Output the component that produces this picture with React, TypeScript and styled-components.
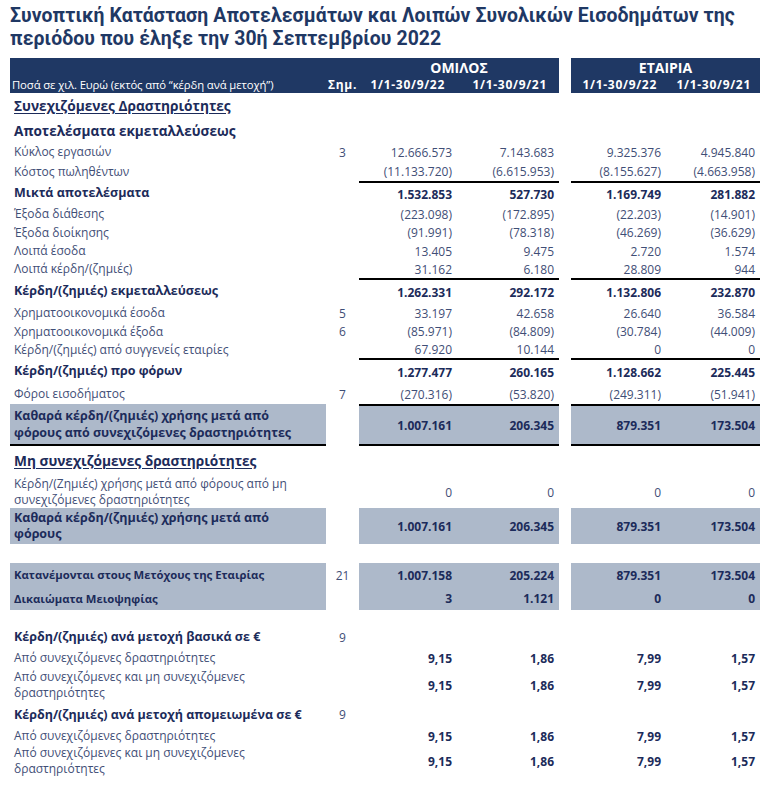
import React from "react";
import styled, { createGlobalStyle, css } from "styled-components";

const Global = createGlobalStyle`
  html, body { margin: 0; padding: 0; background: #ffffff; }
  body { font-family: "Open Sans", "DejaVu Sans", sans-serif; }
`;

const NAVY = "#1f3864";
const GRAY = "#adb9ca";
const TXT = "#3f4e76";
const BOLD = "#1c2b5a";
const COLS = "316px 33px 98px 102px 12px 95px 94px";

const Page = styled.div`
  width: 750px;
  padding: 4px 0 0 10px;
`;

const Title = styled.h1`
  margin: 0 0 8px 0;
  font-family: Roboto, "Liberation Sans", sans-serif;
  font-weight: 700;
  font-size: 19.4px;
  line-height: 23px;
  color: ${NAVY};
  letter-spacing: 0.1px;
`;

const HeaderRow = styled.div`
  display: grid;
  grid-template-columns: ${COLS};
  height: 35px;
`;

const HeadBlock = styled.div<{ $span: string; $cols: string }>`
  grid-column: ${(p) => p.$span};
  background: ${NAVY};
  display: grid;
  grid-template-columns: ${(p) => p.$cols};
  grid-template-rows: 18px 17px;
  color: #ffffff;
`;

const GroupTitle = styled.div<{ $span: string }>`
  grid-column: ${(p) => p.$span};
  grid-row: 1;
  text-align: center;
  font-family: "Open Sans", sans-serif;
  font-weight: 700;
  font-size: 14px;
  line-height: 20px;
`;

const HeadCaption = styled.div`
  grid-row: 2;
  font-size: 11.3px;
  line-height: 17px;
  padding-left: 2px;
  white-space: nowrap;
  letter-spacing: -0.1px;
`;

const HeadCell = styled.div<{ $pr?: number; $center?: boolean }>`
  grid-row: 2;
  font-weight: 700;
  font-size: 12px;
  line-height: 17px;
  letter-spacing: 0.7px;
  white-space: nowrap;
  text-align: ${(p) => (p.$center ? "center" : "right")};
  padding-right: ${(p) => p.$pr ?? 0}px;
`;

const Row = styled.div<{ $h: number }>`
  display: grid;
  grid-template-columns: ${COLS};
  height: ${(p) => p.$h}px;
`;

type LabelVariant = "section" | "sub" | "total" | "item" | "small";

const labelStyles: Record<LabelVariant, ReturnType<typeof css>> = {
  section: css`
    font-weight: 700;
    font-size: 13.7px;
    color: ${BOLD};
    text-decoration: underline;
    text-underline-offset: 2px;
  `,
  sub: css`
    font-weight: 700;
    font-size: 13.6px;
    color: ${BOLD};
  `,
  total: css`
    font-weight: 700;
    font-size: 12.5px;
    color: ${BOLD};
  `,
  small: css`
    font-weight: 700;
    font-size: 11.3px;
    color: ${BOLD};
  `,
  item: css`
    font-weight: 400;
    font-size: 12px;
    color: ${TXT};
  `,
};

const Label = styled.div<{ $v: LabelVariant; $gray?: boolean; $under?: boolean; $lh?: number }>`
  display: flex;
  align-items: center;
  padding-left: 4px;
  line-height: ${(p) => p.$lh ?? 16}px;
  background: ${(p) => (p.$gray ? GRAY : "transparent")};
  border-bottom: ${(p) => (p.$under ? "2px solid #000" : "none")};
  white-space: nowrap;
  ${(p) => labelStyles[p.$v]}
`;

const Note = styled.div`
  display: flex;
  align-items: center;
  justify-content: center;
  font-size: 12px;
  color: ${TXT};
`;

const Num = styled.div<{ $bold?: boolean; $gray?: boolean; $top?: boolean; $under?: boolean }>`
  display: flex;
  align-items: center;
  justify-content: flex-end;
  padding-right: 5px;
  font-size: 12px;
  font-weight: ${(p) => (p.$bold ? 700 : 400)};
  color: ${(p) => (p.$bold ? BOLD : TXT)};
  background: ${(p) => (p.$gray ? GRAY : "transparent")};
  border-top: ${(p) => (p.$top ? "2px solid #000" : "none")};
  border-bottom: ${(p) => (p.$under ? "2px solid #000" : "none")};
`;

const Gap = styled.div``;

const Spacer = styled.div<{ $h: number }>`
  height: ${(p) => p.$h}px;
`;

type LineProps = {
  h: number;
  label: React.ReactNode;
  v?: LabelVariant;
  note?: string;
  vals?: string[];
  bold?: boolean;
  gray?: boolean;
  top?: boolean;
  under?: boolean;
  lh?: number;
};

const Line = ({ h, label, v = "item", note, vals = ["", "", "", ""], bold, gray, top, under, lh }: LineProps) => (
  <Row $h={h}>
    <Label $v={v} $gray={gray} $under={under} $lh={lh}>
      {label}
    </Label>
    <Note>{note}</Note>
    <Num $bold={bold} $gray={gray} $top={top} $under={under}>{vals[0]}</Num>
    <Num $bold={bold} $gray={gray} $top={top} $under={under}>{vals[1]}</Num>
    <Gap />
    <Num $bold={bold} $gray={gray} $top={top} $under={under}>{vals[2]}</Num>
    <Num $bold={bold} $gray={gray} $top={top} $under={under}>{vals[3]}</Num>
  </Row>
);

export default function App() {
  return (
    <Page>
      <Global />
      <Title>
        Συνοπτική Κατάσταση Αποτελεσμάτων και Λοιπών Συνολικών Εισοδημάτων της
        <br />
        περιόδου που έληξε την 30ή Σεπτεμβρίου 2022
      </Title>
      <HeaderRow>
        <HeadBlock $span="1 / 5" $cols="316px 33px 98px 102px">
          <GroupTitle $span="3 / 5">ΟΜΙΛΟΣ</GroupTitle>
          <HeadCaption>Ποσά σε χιλ. Ευρώ (εκτός από “κέρδη ανά μετοχή”)</HeadCaption>
          <HeadCell $center>Σημ.</HeadCell>
          <HeadCell $pr={12}>1/1-30/9/22</HeadCell>
          <HeadCell $pr={12}>1/1-30/9/21</HeadCell>
        </HeadBlock>
        <HeadBlock $span="6 / 8" $cols="95px 94px">
          <GroupTitle $span="1 / 3">ΕΤΑΙΡΙΑ</GroupTitle>
          <HeadCell $pr={9}>1/1-30/9/22</HeadCell>
          <HeadCell $pr={9}>1/1-30/9/21</HeadCell>
        </HeadBlock>
      </HeaderRow>

      <Line h={26} v="section" label="Συνεχιζόμενες Δραστηριότητες" />
      <Line h={23} v="sub" label="Αποτελέσματα εκμεταλλεύσεως" />
      <Line h={20} label="Κύκλος εργασιών" note="3" vals={["12.666.573", "7.143.683", "9.325.376", "4.945.840"]} />
      <Line h={19} label="Κόστος πωληθέντων" vals={["(11.133.720)", "(6.615.953)", "(8.155.627)", "(4.663.958)"]} />
      <Line h={24} v="total" bold top label="Μικτά αποτελέσματα" vals={["1.532.853", "527.730", "1.169.749", "281.882"]} />
      <Line h={18} label="Έξοδα διάθεσης" vals={["(223.098)", "(172.895)", "(22.203)", "(14.901)"]} />
      <Line h={19} label="Έξοδα διοίκησης" vals={["(91.991)", "(78.318)", "(46.269)", "(36.629)"]} />
      <Line h={18} label="Λοιπά έσοδα" vals={["13.405", "9.475", "2.720", "1.574"]} />
      <Line h={18} label="Λοιπά κέρδη/(ζημιές)" vals={["31.162", "6.180", "28.809", "944"]} />
      <Line h={26} v="total" bold top label="Κέρδη/(ζημιές) εκμεταλλεύσεως" vals={["1.262.331", "292.172", "1.132.806", "232.870"]} />
      <Line h={18} label="Χρηματοοικονομικά έσοδα" note="5" vals={["33.197", "42.658", "26.640", "36.584"]} />
      <Line h={19} label="Χρηματοοικονομικά έξοδα" note="6" vals={["(85.971)", "(84.809)", "(30.784)", "(44.009)"]} />
      <Line h={17} label="Κέρδη/(ζημιές) από συγγενείς εταιρίες" vals={["67.920", "10.144", "0", "0"]} />
      <Line h={26} v="total" bold top label="Κέρδη/(ζημιές) προ φόρων" vals={["1.277.477", "260.165", "1.128.662", "225.445"]} />
      <Line h={20} label="Φόροι εισοδήματος" note="7" vals={["(270.316)", "(53.820)", "(249.311)", "(51.941)"]} />
      <Line
        h={42}
        v="total"
        bold
        gray
        top
        under
        lh={17}
        label={<span>Καθαρά κέρδη/(ζημιές) χρήσης μετά από<br />φόρους από συνεχιζόμενες δραστηριότητες</span>}
        vals={["1.007.161", "206.345", "879.351", "173.504"]}
      />
      <Line h={30} v="section" label="Μη συνεχιζόμενες δραστηριότητες" />
      <Line
        h={32}
        lh={16}
        label={<span>Κέρδη/(Ζημιές) χρήσης μετά από φόρους από μη<br />συνεχιζόμενες δραστηριότητες</span>}
        vals={["0", "0", "0", "0"]}
      />
      <Line
        h={36}
        v="total"
        bold
        gray
        lh={16}
        label={<span>Καθαρά κέρδη/(ζημιές) χρήσης μετά από<br />φόρους</span>}
        vals={["1.007.161", "206.345", "879.351", "173.504"]}
      />
      <Spacer $h={19} />
      <Line h={24} v="small" bold gray label="Κατανέμονται στους Μετόχους της Εταιρίας" note="21" vals={["1.007.158", "205.224", "879.351", "173.504"]} />
      <Line h={23} v="small" bold gray label="Δικαιώματα Μειοψηφίας" vals={["3", "1.121", "0", "0"]} />
      <Spacer $h={16} />
      <Line h={22} v="total" label="Κέρδη/(ζημιές) ανά μετοχή βασικά σε €" note="9" />
      <Line h={20} label="Από συνεχιζόμενες δραστηριότητες" bold vals={["9,15", "1,86", "7,99", "1,57"]} />
      <Line
        h={34}
        lh={16}
        bold
        label={<span>Από συνεχιζόμενες και μη συνεχιζόμενες<br />δραστηριότητες</span>}
        vals={["9,15", "1,86", "7,99", "1,57"]}
      />
      <Line h={25} v="total" label="Κέρδη/(ζημιές) ανά μετοχή απομειωμένα σε €" note="9" />
      <Line h={18} label="Από συνεχιζόμενες δραστηριότητες" bold vals={["9,15", "1,86", "7,99", "1,57"]} />
      <Line
        h={32}
        lh={16}
        bold
        label={<span>Από συνεχιζόμενες και μη συνεχιζόμενες<br />δραστηριότητες</span>}
        vals={["9,15", "1,86", "7,99", "1,57"]}
      />
    </Page>
  );
}
